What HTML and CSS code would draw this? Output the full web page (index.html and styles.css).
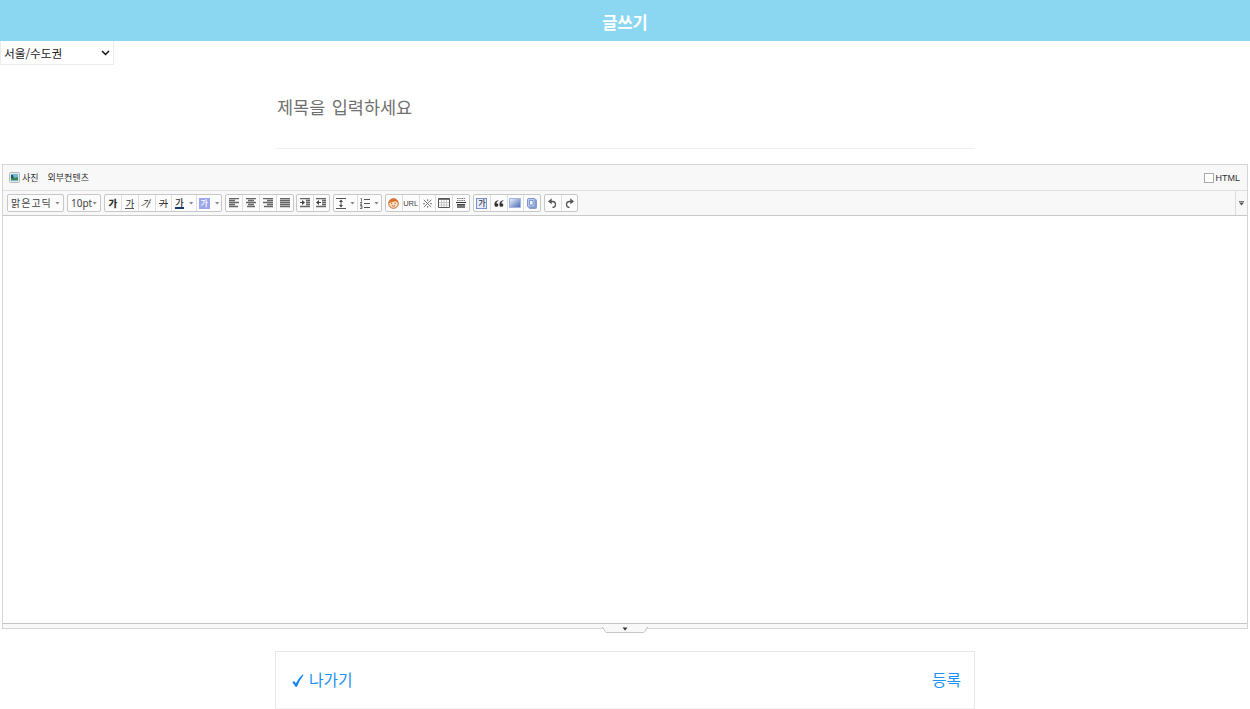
FILE: index.html
```html
<!DOCTYPE html>
<html lang="ko">
<head>
<meta charset="utf-8">
<title>글쓰기</title>
<link rel="stylesheet" href="styles.css">
</head>
<body>
<header class="header"><h1 class="header-title">글쓰기</h1></header>
<div class="region-select">
  <span>서울/수도권</span>
  <svg class="chevron" width="9" height="6" viewBox="0 0 9 6"><path d="M1 1l3.5 3.5L8 1" fill="none" stroke="#111" stroke-width="1.5"/></svg>
</div>
<div class="subject"><span class="subject-placeholder">제목을 입력하세요</span></div>

<section class="editor">
  <div class="attach-bar">
    <svg class="photo-icon" width="11" height="11" viewBox="0 0 11 11"><rect x=".5" y=".5" width="10" height="10" rx="1" fill="#e5e9e7" stroke="#b3bab7"/><rect x="2" y="2" width="7" height="7" fill="#73b5df"/><path d="M2 5l2-1 2 2 3-1v3H2z" fill="#37854f"/><path d="M2 3h2v3H2z" fill="#26505b"/></svg>
    <span class="attach-photo">사진</span>
    <span>외부컨텐츠</span>
    <span class="html-toggle"><i class="checkbox"></i>HTML</span>
  </div>
  <div class="toolbar">
    <div class="group font-group"><span class="font-name">맑은고딕</span><i class="caret"></i></div>
    <div class="group size-group"><span>10pt</span><i class="caret"></i></div>
    <div class="group style-group">
      <span class="btn"><b class="ga heavy">가</b></span>
      <span class="btn"><span class="ga underlined">가</span></span>
      <span class="btn"><span class="ga slanted">가</span></span>
      <span class="btn"><span class="ga struck">가</span></span>
      <span class="btn wide"><span class="ga fore">가</span><i class="caret"></i></span>
      <span class="btn wide"><span class="ga back">가</span><i class="caret"></i></span>
    </div>
    <div class="group align-group">
      <span class="btn"><svg width="10" height="10" viewBox="0 0 10 10"><path class="bar" d="M0 .5h10M0 2.5h6M0 4.5h10M0 6.5h6M0 8.5h9"/></svg></span>
      <span class="btn"><svg width="10" height="10" viewBox="0 0 10 10"><path class="bar" d="M0 .5h10M2 2.5h6M0 4.5h10M2 6.5h6M1 8.5h8"/></svg></span>
      <span class="btn"><svg width="10" height="10" viewBox="0 0 10 10"><path class="bar" d="M0 .5h10M4 2.5h6M0 4.5h10M4 6.5h6M1 8.5h9"/></svg></span>
      <span class="btn"><svg width="10" height="10" viewBox="0 0 10 10"><path class="bar" d="M0 .5h10M0 2.5h10M0 4.5h10M0 6.5h10M0 8.5h10"/></svg></span>
    </div>
    <div class="group indent-group">
      <span class="btn"><svg width="10" height="10" viewBox="0 0 10 10"><path class="bar" d="M0 .5h10M6 2.5h4M6 4.5h4M6 6.5h4M0 8.5h10"/><path d="M0 4h2V2l3 2.500L2 7V5H0z" fill="#444"/></svg></span>
      <span class="btn"><svg width="10" height="10" viewBox="0 0 10 10"><path class="bar" d="M0 .5h10M6 2.5h4M6 4.5h4M6 6.5h4M0 8.5h10"/><path d="M5 4H3V2L0 4.500 3 7V5h2z" fill="#444"/></svg></span>
    </div>
    <div class="group spacing-group">
      <span class="btn wide"><svg width="10" height="11" viewBox="0 0 10 11"><path d="M0 .5h10M0 10.5h10M5 3v5" stroke="#555" fill="none"/><path d="M5 1.500l2 2.500H3zM5 9.500L7 7H3z" fill="#444"/></svg><i class="caret"></i></span>
      <span class="btn wide"><svg width="10" height="11" viewBox="0 0 10 11"><path d="M4 1.5h6M4 5.5h6M4 9.5h6" stroke="#555"/><path d="M.5.5h1v3M0 4.5h2L.5 6.5H2M0 7.5h2v3H0M.5 9H2" fill="none" stroke="#555" stroke-width=".8"/></svg><i class="caret"></i></span>
    </div>
    <div class="group insert-group">
      <span class="btn"><svg width="11" height="11" viewBox="0 0 11 11"><circle cx="5.5" cy="5.5" r="4.8" fill="#ffe0bd" stroke="#c56a34"/><path d="M.8 5C1-.8 10-.8 10.200 5L8 3.200 4 4z" fill="#dd6f2c"/><path d="M3 5.300h1.200M6.500 5.300h1.200" stroke="#744" stroke-width=".8"/><path d="M3.800 7.500q1.700 1.300 3.400 0" fill="none" stroke="#d0452e" stroke-width=".8"/></svg></span>
      <span class="btn url">URL</span>
      <span class="btn"><svg width="9" height="9" viewBox="0 0 9 9"><path d="M.8.8l7.400 7.400M8.200.8L.8 8.200" stroke="#666" stroke-width=".9"/><path d="M4 .5h1.200v1.300H4zM4 7.200h1.200v1.300H4zM.4 4h1.300v1.200H.4zM7.300 4h1.300v1.200H7.300z" fill="#555"/></svg></span>
      <span class="btn"><svg width="12" height="10" viewBox="0 0 12 10"><path d="M.5.5h11v9H.5z" fill="#fff" stroke="#555"/><path d="M1 1h10v1H1z" fill="#777"/><path d="M3.500 2v7M6 2v7M8.500 2v7M1 4.500h10M1 7h10" stroke="#bbb" stroke-width=".8"/></svg></span>
      <span class="btn"><svg width="10" height="10" viewBox="0 0 10 10"><path d="M1 .5h8M1 2.5h8" stroke="#777" stroke-dasharray="1.5 .7"/><path d="M0 4.5h10" stroke="#333"/><path d="M1 6h8v4H1z" fill="#777"/><path d="M1 6.500h8" stroke="#444"/></svg></span>
    </div>
    <div class="group block-group">
      <span class="btn"><span class="ga boxed">가</span></span>
      <span class="btn"><svg width="10" height="7" viewBox="0 0 10 7"><path d="M4.200.3C2 .6.4 2.200.4 4.400.4 6 1.200 6.800 2.400 6.800S4.300 6 4.300 5 3.600 3.200 2.400 3.200C2.500 2 3.200 1.300 4.500 1zM9.200.3C7 .6 5.400 2.200 5.400 4.400c0 1.600.8 2.400 2 2.400S9.300 6 9.300 5 8.600 3.200 7.400 3.200C7.500 2 8.200 1.300 9.500 1z" fill="#333"/></svg></span>
      <span class="btn"><svg width="12" height="10" viewBox="0 0 12 10"><defs><linearGradient id="fill" x1="0" y1="0" x2="1" y2="1"><stop offset="0" stop-color="#f3f7ff"/><stop offset="1" stop-color="#3f66b5"/></linearGradient></defs><path d="M.5.5h11v9H.5z" fill="url(#fill)" stroke="#a3b3da"/></svg></span>
      <span class="btn"><svg width="10" height="11" viewBox="0 0 10 11"><rect x="2" y="1.500" width="7.500" height="9" rx="1" fill="#8a9dcc" stroke="#8a9dcc"/><rect x=".5" y=".5" width="7.500" height="8.500" rx="1" fill="#b9cbf2" stroke="#7f96cf"/><path d="M2.500 2.500h3.500v4.500H2.500z" fill="#edf2ff" stroke="#6c86c2" stroke-width=".8"/></svg></span>
    </div>
    <div class="group history-group">
      <span class="btn"><svg width="9" height="10" viewBox="0 0 9 10"><path d="M2 3.500h2.500a3 3 0 0 1 0 6" fill="none" stroke="#555" stroke-width="1.300"/><path d="M0 3.500L3.700.3v6z" fill="#555"/></svg></span>
      <span class="btn"><svg width="9" height="10" viewBox="0 0 9 10"><path d="M7 3.500H4.500a3 3 0 0 0 0 6" fill="none" stroke="#555" stroke-width="1.300"/><path d="M9 3.500L5.300.3v6z" fill="#555"/></svg></span>
    </div>
    <span class="more"><svg width="5" height="5" viewBox="0 0 5 5"><path d="M0 .5h5" stroke="#777"/><path d="M0 1.500h5L2.500 4.500z" fill="#555"/></svg></span>
  </div>
  <div class="canvas"></div>
  <div class="resize-bar">
    <svg class="handle" width="48" height="7" viewBox="0 0 48 7"><path d="M1 0Q3 1 4 4.500 4.500 5.500 6 5.500H42Q43.500 5.500 44 4.500 45 1 47 0" fill="#f8f8f8" stroke="#c8c8c8"/><path d="M21.500.5h5L24 3.500z" fill="#333"/></svg>
  </div>
</section>

<footer class="actions">
  <span class="leave"><svg width="12" height="13" viewBox="0 0 12 13"><path d="M.3 8.300L2.200 6.900l1.700 2.300Q6.500 3.800 10.600.4l1 .5Q7.500 6 5 12.700H3.400Q2 10 .3 8.300z" fill="#1687ef"/></svg>나가기</span>
  <span>등록</span>
</footer>
</body>
</html>
```
FILE: styles.css
```css
* { box-sizing: border-box; }
body {
  margin: 0;
  height: 709px;
  overflow: hidden;
  background: #fff;
  font-family: "Noto Sans CJK KR", "Noto Sans", sans-serif;
  color: #333;
}
svg { display: block; flex: none; }
.header {
  height: 41px;
  padding-top: 3px;
  background: #8bd7f1;
  display: flex;
  align-items: center;
  justify-content: center;
}
.header-title { margin: 0; font-size: 16.500px; line-height: 24px; font-weight: 700; color: #fff; }
.region-select {
  width: 114px;
  height: 24px;
  padding: 0 3px;
  border: 1px solid #ececec;
  border-top: 0;
  display: flex;
  align-items: center;
  justify-content: space-between;
  font-size: 11.700px;
  line-height: 20px;
  color: #222;
}
.subject {
  width: 700px;
  height: 84px;
  margin: 0 auto;
  padding: 29px 2px 0;
  border-bottom: 1px solid #f0f0f0;
}
.subject-placeholder {
  display: block;
  font-size: 17.500px;
  line-height: 26px;
  word-spacing: 1.500px;
  color: #707070;
}
.editor { width: 1246px; height: 465px; margin: 15px 2px 0; border: 1px solid #d5d5d5; }
.attach-bar {
  height: 26px;
  padding: 0 7px 0 6px;
  display: flex;
  align-items: center;
  background: #f8f8f8;
  border-bottom: 1px solid #dfdfdf;
  font-size: 9px;
  line-height: 14px;
}
.photo-icon { margin-right: 2px; }
.attach-photo { margin-right: 9px; }
.html-toggle {
  margin-left: auto;
  display: flex;
  align-items: center;
  gap: 2px;
  font-family: "Liberation Sans", Arial, sans-serif;
  font-size: 9px;
}
.checkbox { width: 10px; height: 10px; border: 1px solid #aaa; background: #fff; }
.toolbar {
  height: 25px;
  padding-left: 4px;
  display: flex;
  align-items: center;
  gap: 3px;
  background: #f8f8f8;
  border-bottom: 1px solid #c9c9c9;
}
.group {
  height: 18px;
  display: flex;
  border: 1px solid #c8c8c8;
  border-radius: 2px;
  background: #fcfcfc;
}
.btn { flex: 1 1 0; display: flex; align-items: center; justify-content: center; }
.btn + .btn { border-left: 1px solid #dedede; }
.wide { flex-grow: 1.500; gap: 5px; }
.caret { width: 5px; height: 3px; background: #888; clip-path: polygon(0 0, 100% 0, 50% 100%); flex: none; }
.font-group { width: 57px; padding: 0 3px; align-items: center; justify-content: space-between; }
.font-name { font-size: 10px; letter-spacing: 1px; color: #444; line-height: 14px; }
.size-group { width: 34px; padding: 0 3px; align-items: center; justify-content: space-between; font: 10px/14px "Noto Sans", sans-serif; color: #444; }
.style-group { width: 118px; }
.align-group { width: 69px; }
.indent-group { width: 34px; margin-left: -1px; }
.spacing-group { width: 49px; }
.insert-group { width: 85px; }
.block-group { width: 68px; }
.history-group { width: 34px; }
.ga { font-size: 9.500px; line-height: 10px; height: 11px; color: #333; }
.heavy { font-weight: 900; }
.underlined { border-bottom: 1px solid #555; }
.slanted { transform: skewX(-25deg); }
.struck { background: linear-gradient(#444, #444) 0 5px / 100% 1px no-repeat; }
.fore { border-bottom: 2px solid #173b69; height: 12px; font-weight: 500; }
.back { width: 11px; height: 11px; text-align: center; background: #9da6ec; color: #fff; font-size: 8px; font-weight: 500; }
.boxed { width: 11px; height: 11px; border: 1px solid #7890cd; background: #e4ebff; font-size: 8px; line-height: 8px; text-align: center; font-weight: 500; }
.spacing-group .wide { gap: 4px; }
.url { font: 7.500px "Liberation Sans", Arial, sans-serif; color: #444; }
.bar { stroke: #666; stroke-width: 1.400; }
.more {
  width: 12px;
  height: 24px;
  margin-left: auto;
  border-left: 1px solid #dedede;
  display: flex;
  align-items: center;
  justify-content: center;
}
.canvas { height: 407px; background: #fff; }
.resize-bar {
  position: relative;
  height: 5px;
  border-top: 1px solid #c4c4c4;
  background: #f8f8f8;
}
.handle { position: absolute; left: 598px; top: 3px; }
.actions {
  width: 700px;
  height: 58px;
  margin: 22px auto 0;
  padding: 0 13px 0 16px;
  border: 1px solid #e7e7e7;
  border-bottom-color: #f3f3f3;
  display: flex;
  align-items: center;
  justify-content: space-between;
  font-size: 15.800px;
  line-height: 24px;
  color: #1b92f2;
}
.leave { display: flex; align-items: center; gap: 5px; }
```
